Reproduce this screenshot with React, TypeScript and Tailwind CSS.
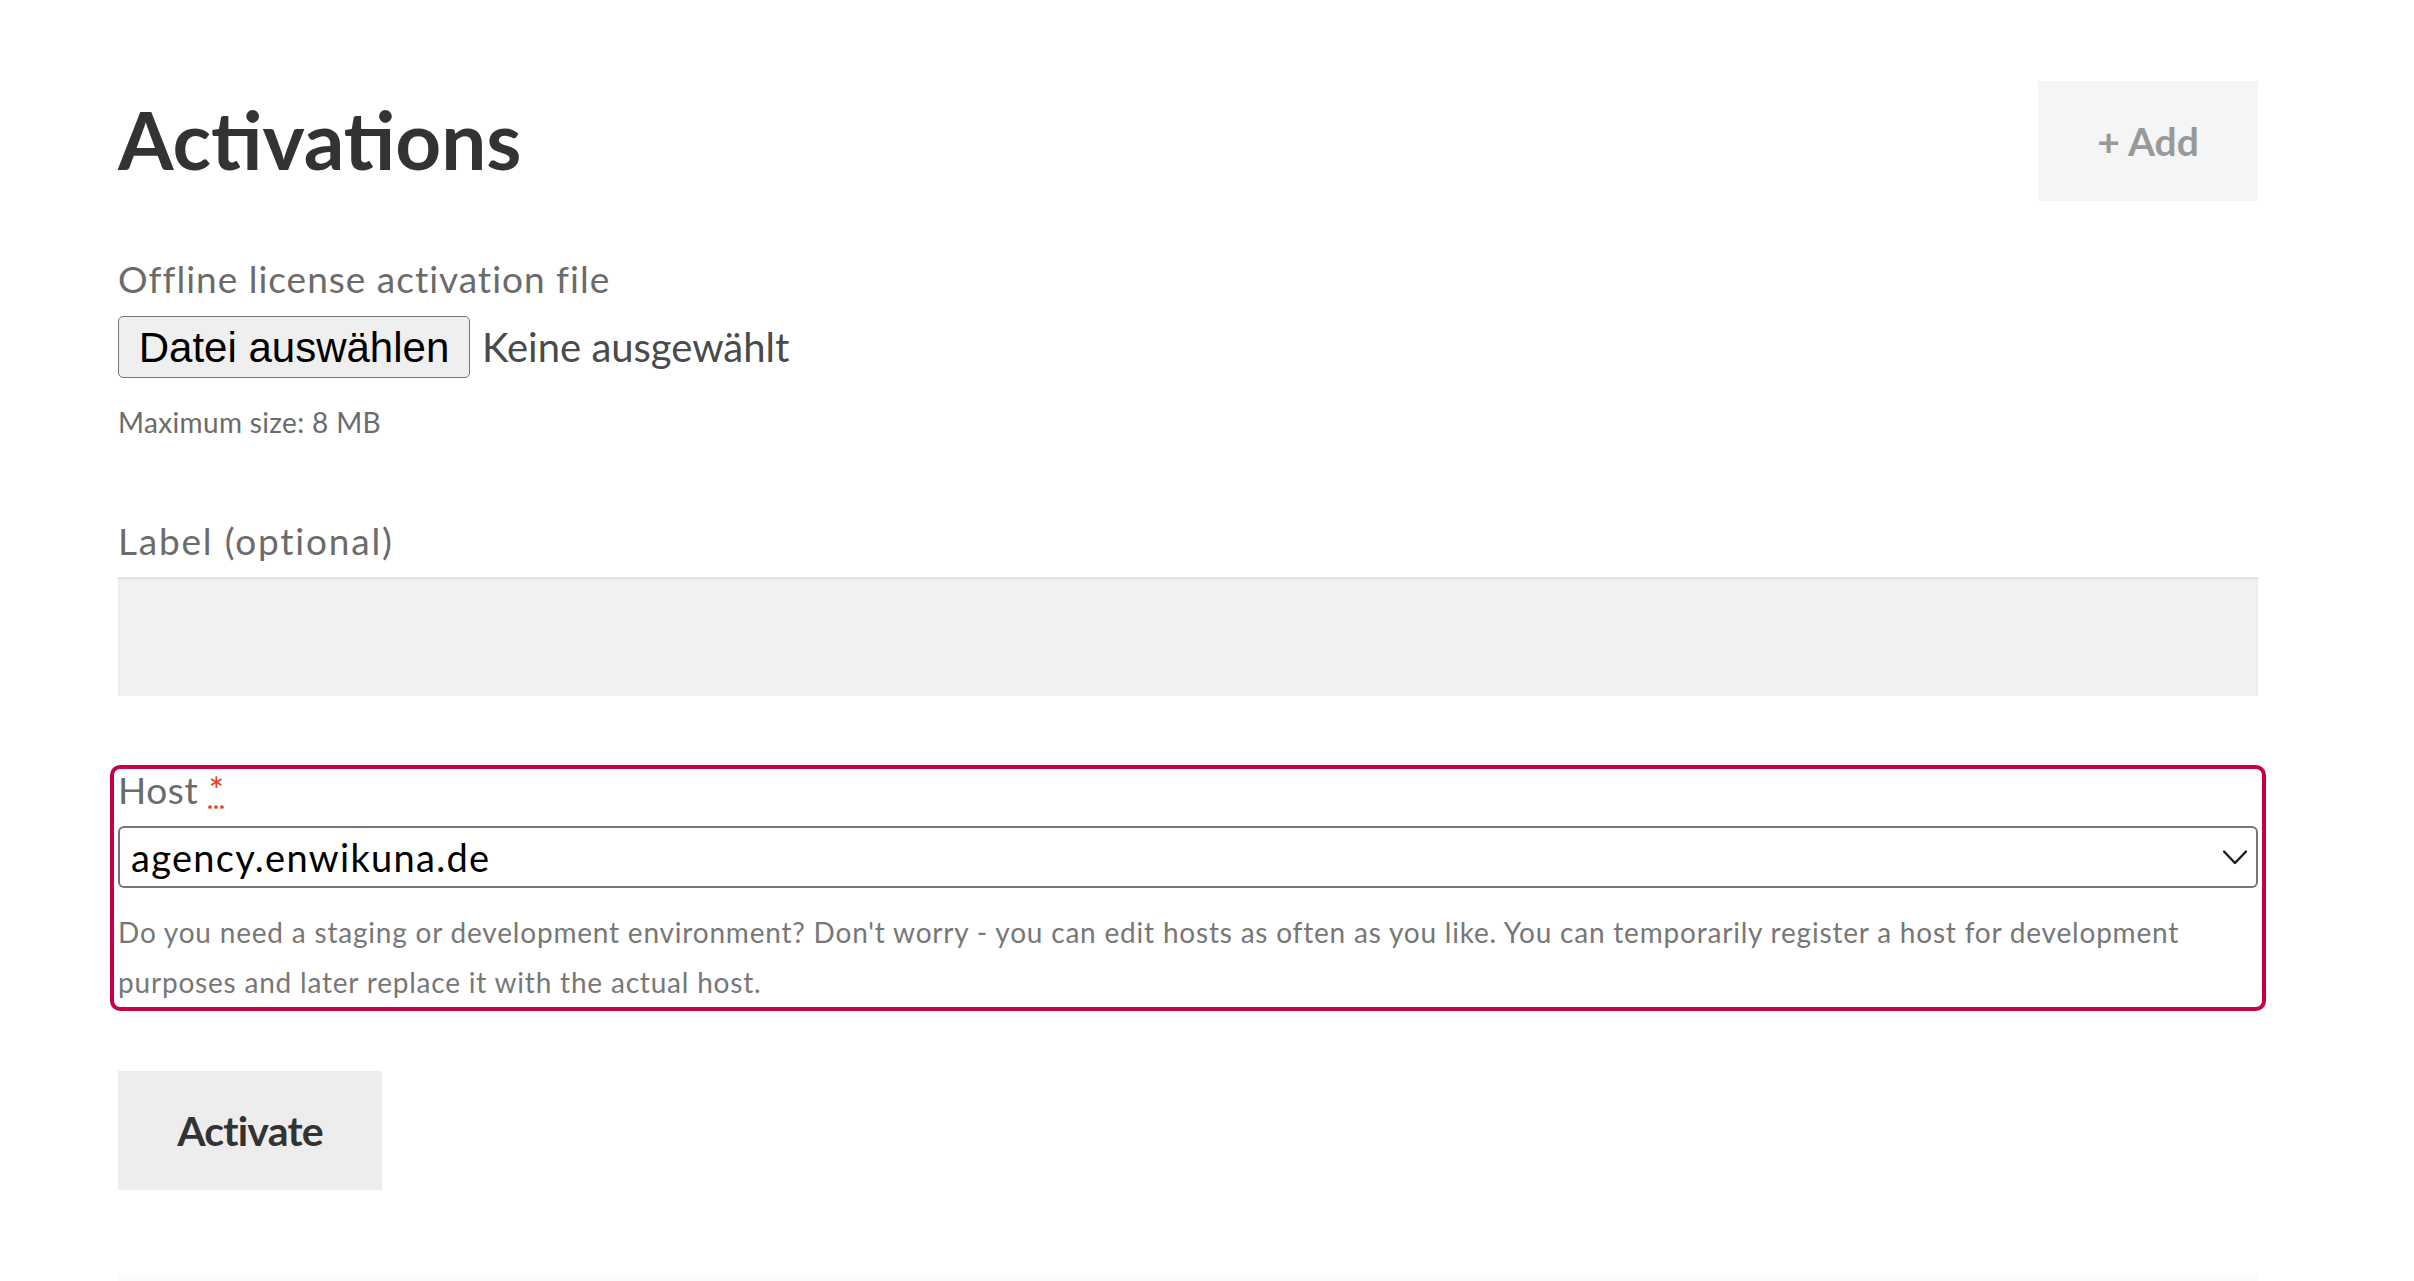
import React from "react";

// Small chevron used inside the host select
function Chevron() {
  return (
    <svg width="24" height="15" viewBox="0 0 24 15" fill="none" className="shrink-0">
      <polyline points="1,1.5 12,13 23,1.5" stroke="#1a1a1a" strokeWidth="2.4" strokeLinecap="round" strokeLinejoin="round" />
    </svg>
  );
}

export default function App() {
  return (
    <div className="min-h-screen bg-white font-['Lato',sans-serif] text-[#6b6b6b]">
      <div className="ml-[118px] w-[2140px] pt-[81px]">
        {/* Header */}
        <header className="flex h-[120px] items-center justify-between">
          <h1 className="mb-[4px] text-[80px] font-bold leading-[80px] text-[#333]">Activations</h1>
          <button className="h-[120px] w-[220px] bg-[#f5f5f5] text-[39px] font-bold text-[#999]">+ Add</button>
        </header>

        {/* Offline file */}
        <div className="mt-[51px] text-[37px] leading-[54px] tracking-[1px]">Offline license activation file</div>
        <div className="mt-[10px] flex items-center gap-[12px]">
          <div className="flex h-[62px] w-[352px] items-center justify-center rounded-[5px] border-[1.5px] border-[#767676] bg-[#efefef] font-['Liberation_Sans',Arial,sans-serif] text-[42px] text-black">
            Datei auswählen
          </div>
          <span className="text-[40px] text-[#4a4a4a]">Keine ausgewählt</span>
        </div>
        <div className="mt-[23px] text-[28px] leading-[42px] tracking-[0.35px]">Maximum size: 8 MB</div>

        {/* Label */}
        <div className="mt-[70px] text-[37px] leading-[56px] tracking-[1.8px]">Label (optional)</div>
        <div className="mt-[8px] h-[119px] bg-[#f1f1f1] shadow-[inset_0_2px_2px_rgba(0,0,0,0.08)]" />

        {/* Host (highlighted) */}
        <div className="-ml-[8px] mt-[69px] w-[2156px] rounded-[10px] border-4 border-[#c8004a] px-[4px]">
          <div className="pt-[1px] text-[37px] leading-[40px] tracking-[0.6px]">
            Host <abbr title="required" className="text-[#e4411b]">*</abbr>
          </div>
          <div className="mt-[16px] flex h-[62px] items-center justify-between rounded-[6px] border-2 border-[#767676] pl-[11px] pr-[9px] text-[38px] tracking-[1.3px] text-black">
            <span>agency.enwikuna.de</span>
            <Chevron />
          </div>
          <p className="mt-[19px] text-[28px] leading-[50px] tracking-[0.8px] text-[#777]">
            Do you need a staging or development environment? Don't worry - you can edit hosts as often as you like. You can temporarily register a host for development
            <br />
            purposes and later replace it with the actual host.
          </p>
        </div>

        {/* Submit */}
        <button className="mt-[60px] h-[119px] w-[264px] bg-[#ededed] text-[41px] font-bold tracking-[-0.8px] text-[#333]">Activate</button>

        <div className="mt-[85px] h-[7px] bg-[#fafafa]" />
      </div>
    </div>
  );
}
